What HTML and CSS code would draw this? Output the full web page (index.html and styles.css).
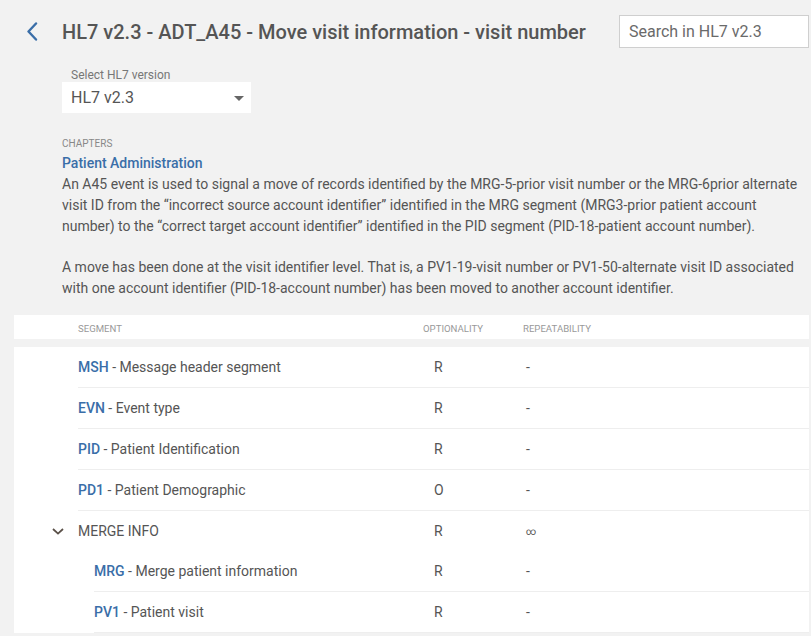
FILE: index.html
```html
<!DOCTYPE html>
<html lang="en">
<head>
<meta charset="utf-8">
<title>HL7 v2.3 - ADT_A45</title>
<link rel="stylesheet" href="styles.css">
</head>
<body>
<div class="page">
  <header class="header">
    <a class="back" href="#" aria-label="Back">
      <svg width="12" height="19" viewBox="0 0 12 19"><path d="M10 1.5 L2.5 9.5 L10 17.5" fill="none" stroke="#3a6ea8" stroke-width="2.4" stroke-linecap="round" stroke-linejoin="round"/></svg>
    </a>
    <h1 class="title">HL7 v2.3 - ADT_A45 - Move visit information - visit number</h1>
    <input class="search" type="text" placeholder="Search in HL7 v2.3">
  </header>

  <div class="version">
    <div class="version-label">Select HL7 version</div>
    <div class="select"><span>HL7 v2.3</span><span class="caret"></span></div>
  </div>

  <section class="chapter">
    <div class="chapter-label">CHAPTERS</div>
    <div class="chapter-name">Patient Administration</div>
    <p class="desc">An A45 event is used to signal a move of records identified by the MRG-5-prior visit number or the MRG-6prior alternate visit ID from the “incorrect source account identifier” identified in the MRG segment (MRG3-prior patient account number) to the “correct target account identifier” identified in the PID segment (PID-18-patient account number).</p>
    <p class="desc">A move has been done at the visit identifier level. That is, a PV1-19-visit number or PV1-50-alternate visit ID associated with one account identifier (PID-18-account number) has been moved to another account identifier.</p>
  </section>

  <div class="table-head">
    <div>Segment</div>
    <div>Optionality</div>
    <div>Repeatability</div>
  </div>

  <div class="table-body">
    <div class="row"><div class="seg"><span class="code">MSH</span> - Message header segment</div><div class="opt">R</div><div class="rep">-</div></div>
    <div class="row"><div class="seg"><span class="code">EVN</span> - Event type</div><div class="opt">R</div><div class="rep">-</div></div>
    <div class="row"><div class="seg"><span class="code">PID</span> - Patient Identification</div><div class="opt">R</div><div class="rep">-</div></div>
    <div class="row"><div class="seg"><span class="code">PD1</span> - Patient Demographic</div><div class="opt">O</div><div class="rep">-</div></div>
    <div class="row group">
      <div class="toggle"><svg width="12" height="7" viewBox="0 0 12 7"><path d="M1 1 L6 5.6 L11 1" fill="none" stroke="#5a5048" stroke-width="1.8"/></svg></div>
      <div class="seg">MERGE INFO</div><div class="opt">R</div><div class="rep inf">∞</div>
    </div>
    <div class="row child"><div class="seg"><span class="code">MRG</span> - Merge patient information</div><div class="opt">R</div><div class="rep">-</div></div>
    <div class="row child"><div class="seg"><span class="code">PV1</span> - Patient visit</div><div class="opt">R</div><div class="rep">-</div></div>
  </div>
</div>
</body>
</html>
```

FILE: styles.css
```css
html, body {
  margin: 0;
  padding: 0;
}
body {
  background: #f2f2f2;
  font-family: Roboto, "Liberation Sans", Arial, sans-serif;
  color: #555;
}
.page {
  padding: 0 2px 0 14px;
}
.header {
  display: flex;
  align-items: center;
  height: 33px;
  padding: 15px 0 0 12px;
}
.back {
  display: flex;
  width: 12px;
  height: 19px;
}
.title {
  margin: 0 0 0 24px;
  font-size: 20px;
  font-weight: 500;
  color: #555;
  white-space: nowrap;
}
.search {
  margin-left: auto;
  box-sizing: border-box;
  width: 190px;
  height: 33px;
  border: 1px solid #cfcfcf;
  background: #fff;
  padding: 0 9px;
  font-family: inherit;
  font-size: 16px;
  color: #555;
  outline: none;
}
.search::placeholder {
  color: #6a6a6a;
  opacity: 1;
}
.version {
  margin: 20px 0 0 48px;
}
.version-label {
  font-size: 12px;
  line-height: 14px;
  color: #777;
  padding-left: 9px;
}
.select {
  display: flex;
  align-items: center;
  justify-content: space-between;
  box-sizing: border-box;
  width: 189px;
  height: 31px;
  background: #fff;
  padding: 0 7px 0 9px;
  font-size: 16px;
  color: #555;
}
.caret {
  width: 0;
  height: 0;
  margin-top: 2px;
  border-left: 5px solid transparent;
  border-right: 5px solid transparent;
  border-top: 5px solid #666;
}
.chapter {
  margin: 25px 0 0 48px;
}
.chapter-label {
  font-size: 10px;
  line-height: 12px;
  color: #888;
}
.chapter-name {
  margin-top: 3px;
  font-size: 14px;
  line-height: 21px;
  font-weight: 500;
  color: #3a6ea8;
}
.desc {
  margin: 0;
  font-size: 14px;
  line-height: 21px;
  color: #555;
}
.desc + .desc {
  margin-top: 20px;
}
.table-head {
  display: grid;
  grid-template-columns: 345px 100px 1fr;
  align-items: center;
  box-sizing: border-box;
  height: 24px;
  margin-top: 16px;
  padding: 3px 0 0 64px;
  background: #fff;
  font-size: 9.6px;
  text-transform: uppercase;
  color: #999;
}
.table-body {
  margin-top: 8px;
  background: #fff;
}
.row {
  display: grid;
  grid-template-columns: 345px 100px 1fr;
  align-items: center;
  height: 40px;
  margin-left: 64px;
  border-bottom: 1px solid #eeeeee;
  font-size: 14px;
  color: #555;
}
.row.group {
  grid-template-columns: 26px 345px 100px 1fr;
  margin-left: 38px;
  border-bottom: 0;
}
.row.child {
  grid-template-columns: 329px 100px 1fr;
  margin-left: 80px;
}
.toggle {
  display: flex;
  align-items: center;
}
.code {
  font-weight: 500;
  color: #3a6ea8;
}
.opt {
  padding-left: 11px;
}
.rep {
  padding-left: 3px;
}
.rep.inf {
  font-size: 10px;
}
```
